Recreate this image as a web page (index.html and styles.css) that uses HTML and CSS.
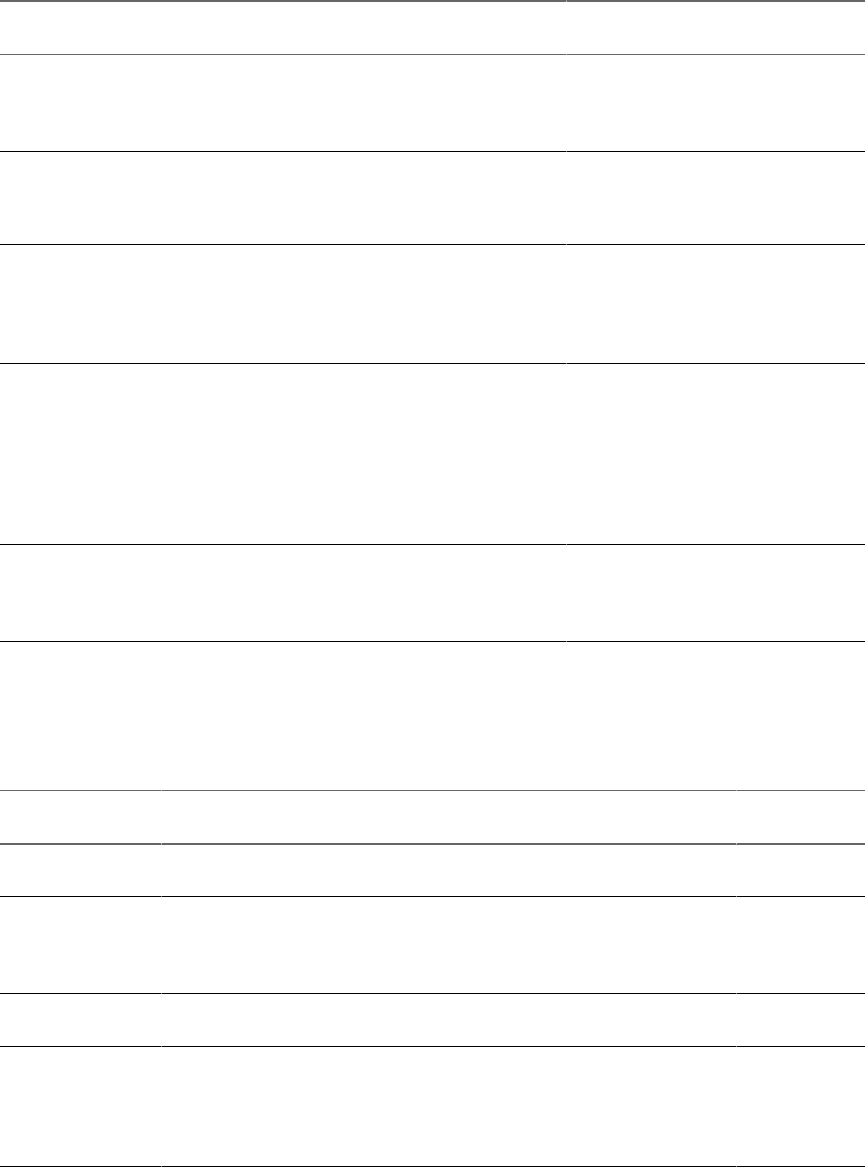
FILE: index.html
```html
<!DOCTYPE html>
<html>
<head>
    <title>Tabel</title>
	<link rel="stylesheet" href="styles.css">
</head>
<body>
	<table class="tabel tabel-satu">
		<colgroup>
			<col class="kol-lebar">
			<col>
		</colgroup>
		<thead>
			<tr class="baris-kepala">
				<th></th>
				<th></th>
			</tr>
		</thead>
		<tbody>
			<tr class="baris-96"><td></td><td></td></tr>
			<tr class="baris-92"><td></td><td></td></tr>
			<tr class="baris-118"><td></td><td></td></tr>
			<tr class="baris-180"><td></td><td></td></tr>
			<tr class="baris-96"><td></td><td></td></tr>
		</tbody>
	</table>

	<table class="tabel tabel-dua">
		<colgroup>
			<col class="kol-kiri">
			<col>
			<col class="kol-kanan">
		</colgroup>
		<thead>
			<tr class="baris-kepala">
				<th></th>
				<th></th>
				<th></th>
			</tr>
		</thead>
		<tbody>
			<tr class="baris-51"><td></td><td></td><td></td></tr>
			<tr class="baris-96"><td></td><td></td><td></td></tr>
			<tr class="baris-52"><td></td><td></td><td></td></tr>
			<tr class="baris-119"><td></td><td></td><td></td></tr>
		</tbody>
	</table>
</body>
</html>
```

FILE: styles.css
```css
body{
	margin: 0;
	background: #fff;
	font-family: "Liberation Sans", Arial, sans-serif;
	font-size: 14px;
	color: #fff;
}
.tabel{
	width: 100%;
	table-layout: fixed;
	border-collapse: separate;
	border-spacing: 0;
}
.tabel th,
.tabel td{
	padding: 0;
	border-bottom: 1px solid #000;
}
.tabel th + th,
.tabel td + td{
	border-left: 1px solid transparent;
}
.kol-lebar{ width: 566px; }
.kol-kiri{ width: 161px; }
.kol-kanan{ width: 129px; }

/* tabel atas */
.tabel-satu th{
	height: 52px;
	border-top: 2px solid #666;
	border-bottom: 1px solid #666;
}

/* tabel bawah */
.tabel-dua{
	margin-top: 148px;
}
.tabel-dua th{
	height: 52px;
	border-top: 1px solid #666;
	border-bottom: 2px solid #666;
}

.baris-51 td{ height: 51px; }
.baris-52 td{ height: 52px; }
.baris-92 td{ height: 92px; }
.baris-96 td{ height: 96px; }
.baris-118 td{ height: 118px; }
.baris-119 td{ height: 119px; }
.baris-180 td{ height: 180px; }
```
